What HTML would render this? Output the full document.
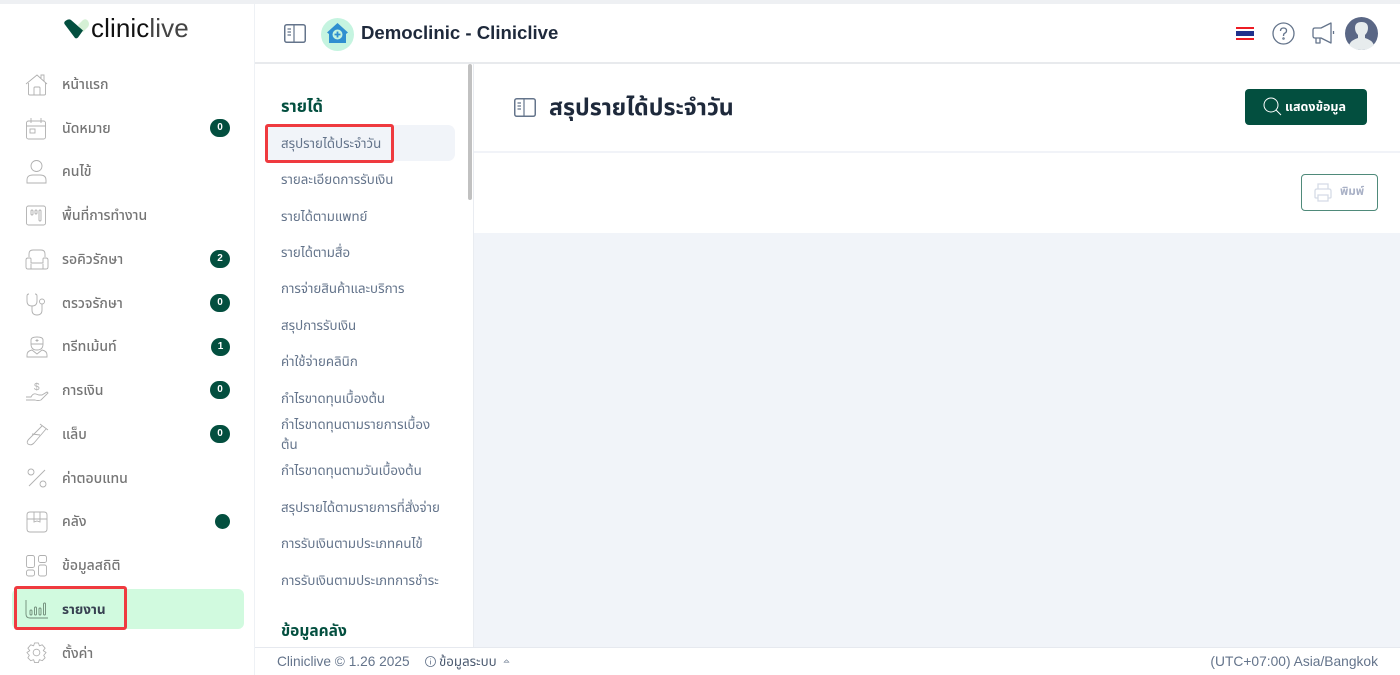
<!DOCTYPE html>
<html lang="th"><head><meta charset="utf-8"><title>Cliniclive</title>
<style>
*{box-sizing:border-box}
html,body{margin:0;padding:0;width:1400px;height:675px;overflow:hidden;background:#fff;font-family:"Liberation Sans","Noto Sans Thai","Noto Sans CJK SC",sans-serif}
.a{position:absolute;white-space:nowrap}
.nav{left:62px;font-size:14px;color:#757575;line-height:18px;font-weight:500}
.badge{width:20px;height:18px;border-radius:10px;background:#034f3f;color:#fff;font-size:10px;font-weight:700;text-align:center;line-height:18px}
.sub{left:281px;font-size:13.300px;color:#64748b;line-height:20px}
svg{position:absolute;overflow:visible}
.ic{fill:none;stroke:#b0b0b0;stroke-width:.9}
.hd{fill:none;stroke:#64748b;stroke-width:1.5}
</style></head><body>
<div class="a" style="left:0;top:0;width:1400px;height:4px;background:#eef0f3"></div>
<div class="a" style="left:254px;top:4px;width:1px;height:671px;background:#eef1f5"></div>
<div class="a" style="left:255px;top:62px;width:1145px;height:2px;background:#e8eaed"></div>

<!-- logo -->
<svg style="left:64px;top:19px" width="25" height="20" viewBox="0 0 25 20"><path d="M14 6L19 1Q22 -1 24 2Q26 5 24 8L19 13Z" fill="#d5f0d5"/><path d="M.5 5Q-.5 3 2 1.500Q5 -.5 7 1L19 11.500L14 18.500Q12.500 20 11 19Z" fill="#034f3f"/></svg>
<div class="a" style="left:91px;top:11px;font-size:26px;line-height:34px;color:#111;letter-spacing:.1px;font-family:'Liberation Sans',sans-serif">clinic<span style="color:#444">live</span></div>

<!-- active nav -->
<div class="a" style="left:12px;top:589px;width:232px;height:40px;background:#d1fadf;border-radius:6px"></div>

<!-- nav icons -->
<svg class="ic" style="left:25px;top:73px" width="24" height="24" viewBox="0 0 24 24"><path d="M1 11 L12 2 L22 11M3.500 10V21Q3.500 22 5 22H19Q20.500 22 20.500 21V10M9 22V15Q9 14 10 14H14Q15 14 15 15V22M16 5V2H19V8"/></svg>
<svg class="ic" style="left:26px;top:117px" width="22" height="23" viewBox="0 0 22 23"><rect x=".5" y="4" width="19" height="18" rx="2"/><path d="M.5 9H19.500M5 1V6M15 1V6"/><rect x="4" y="12" width="5" height="4"/></svg>
<svg class="ic" style="left:26px;top:160px" width="22" height="24" viewBox="0 0 22 24"><circle cx="10.500" cy="6" r="5.500"/><path d="M1 23V20Q1 15 7 15H14Q20 15 20 20V23Z"/></svg>
<svg class="ic" style="left:26px;top:205px" width="22" height="22" viewBox="0 0 22 22"><rect x=".5" y="1" width="19" height="19" rx="2"/><rect x="5" y="5" width="2" height="5" rx="1"/><rect x="9" y="5" width="2" height="4" rx="1"/><rect x="13" y="5" width="2" height="11" rx="1"/></svg>
<svg class="ic" style="left:25px;top:249px" width="24" height="22" viewBox="0 0 24 22"><path d="M4 8V5Q4 1 8 1H16Q20 1 20 5V8M6 14H18V10Q18 9 19 9H21Q23 9 23 11V18Q23 20 21 20H3Q1 20 1 18V11Q1 9 3 9H5Q6 9 6 10Z"/><path d="M6 15V20M18 15V20"/></svg>
<svg class="ic" style="left:26px;top:293px" width="22" height="23" viewBox="0 0 22 23"><path d="M3 1Q1 1 1 3V8Q1 13 6 13Q11 13 11 8V3Q11 1 9 1M6 13V17Q6 22 11 22Q16 22 16 17V11"/><circle cx="16" cy="8.500" r="2.500"/></svg>
<svg class="ic" style="left:26px;top:336px" width="22" height="22" viewBox="0 0 22 22"><path d="M5 4Q5 1 11 1Q17 1 17 4V8H5ZM5 8Q5 14 11 14Q17 14 17 8M1 21V19Q1 15 6 14L11 18L16 14Q21 15 21 19V21Z"/><path d="M11 3V6M9.500 4.500H12.500"/></svg>
<svg class="ic" style="left:25px;top:381px" width="24" height="22" viewBox="0 0 24 22"><path d="M1 16H6Q8 12 11 13L14 14H17L22 11L23 12L16 19Q13 20 10 19L1 19"/><text x="9" y="9" font-size="10" fill="#b0b0b0" stroke="none" font-family="Liberation Sans">$</text></svg>
<svg class="ic" style="left:25px;top:423px" width="24" height="23" viewBox="0 0 24 23"><path d="M15 1L23 7M17 3L4 16Q1 19 3 21Q6 23 9 20L21 6M7 11L15 12"/></svg>
<svg class="ic" style="left:27px;top:468px" width="20" height="20" viewBox="0 0 20 20"><circle cx="4" cy="4" r="3"/><circle cx="16" cy="16" r="3"/><path d="M2 18L18 2"/></svg>
<svg class="ic" style="left:26px;top:511px" width="22" height="22" viewBox="0 0 22 22"><path d="M1 8V4Q1 1 4 1H18Q21 1 21 4V18Q21 21 18 21H4Q1 21 1 18V8H21M8 8V1M14 1V8M14 8V11L11 10L8 11V8"/></svg>
<svg class="ic" style="left:26px;top:555px" width="22" height="22" viewBox="0 0 22 22"><rect x=".5" y=".5" width="8" height="12" rx="2"/><rect x="12.500" y=".5" width="8" height="7" rx="2"/><rect x=".5" y="15" width="8" height="6" rx="2"/><rect x="12.500" y="10" width="8" height="11" rx="2"/></svg>
<svg style="left:25px;top:599px;fill:none;stroke:#6f8a78;stroke-width:.9" width="24" height="20" viewBox="0 0 24 20"><path d="M1 1V15Q1 19 5 19H23"/><rect x="5" y="11" width="2" height="5" rx="1"/><rect x="9.500" y="8" width="2" height="8" rx="1"/><rect x="14" y="9" width="2" height="7" rx="1"/><rect x="18.500" y="4" width="2" height="12" rx="1"/></svg>
<svg class="ic" style="left:25px;top:641px" width="23" height="23" viewBox="0 0 24 24"><circle cx="12" cy="12" r="3.500"/><path d="M10 2H14L15 5L18 4L21 7.500L19 10L22 12L19.500 15L21 17.500L18 20.500L15 19.500L14 22.500H10L9 19.500L6 20.500L3 17.500L4.500 15L2 12L5 10L3 7.500L6 4L9 5Z" stroke-linejoin="round"/></svg>

<!-- nav text -->
<div class="a nav" style="top:75px">หน้าแรก</div>
<div class="a nav" style="top:119px">นัดหมาย</div>
<div class="a nav" style="top:162px">คนไข้</div>
<div class="a nav" style="top:206px">พื้นที่การทำงาน</div>
<div class="a nav" style="top:250px">รอคิวรักษา</div>
<div class="a nav" style="top:294px">ตรวจรักษา</div>
<div class="a nav" style="top:337px">ทรีทเม้นท์</div>
<div class="a nav" style="top:381px">การเงิน</div>
<div class="a nav" style="top:425px">แล็บ</div>
<div class="a nav" style="top:469px">ค่าตอบแทน</div>
<div class="a nav" style="top:512px">คลัง</div>
<div class="a nav" style="top:556px">ข้อมูลสถิติ</div>
<div class="a nav" style="top:601px;color:#374151;font-weight:700;font-size:13.500px">รายงาน</div>
<div class="a nav" style="top:644px">ตั้งค่า</div>

<div class="a badge" style="left:210px;top:119px">0</div>
<div class="a badge" style="left:210px;top:250px">2</div>
<div class="a badge" style="left:210px;top:294px">0</div>
<div class="a badge" style="left:211px;top:338px;width:19px">1</div>
<div class="a badge" style="left:210px;top:381px">0</div>
<div class="a badge" style="left:210px;top:425px">0</div>
<div class="a" style="left:215px;top:514px;width:15px;height:15px;border-radius:50%;background:#034f3f"></div>

<!-- header -->
<svg class="hd" style="left:284px;top:24px" width="22" height="19" viewBox="0 0 22 19"><rect x=".75" y=".75" width="20.500" height="17.500" rx="2"/><path d="M10 1V18M3.500 5H7M3.500 8H7M3.500 11H7" stroke-width="1.200"/></svg>
<div class="a" style="left:321px;top:18px;width:33px;height:33px;border-radius:50%;background:#c5f4e0"></div>
<svg style="left:326px;top:22px" width="23" height="23" viewBox="0 0 23 23"><path d="M11.500 1L22 10.500L20 12V21H3V12L1 10.500Z" fill="#2f8fd0"/><circle cx="11.500" cy="12.500" r="5" fill="#c5f4e0"/><path d="M11.500 9.500V15.500M8.500 12.500H14.500" stroke="#2f8fd0" stroke-width="1.800"/></svg>
<div class="a" style="left:361px;top:20px;font-size:18.600px;line-height:26px;font-weight:700;color:#1e293b">Democlinic - Cliniclive</div>

<!-- flag -->
<div class="a" style="left:1236px;top:27px;width:18px;height:13px;background:linear-gradient(#ed1c24 0 2px,#fff 2px 4px,#20308c 4px 9px,#fff 9px 11px,#ed1c24 11px 13px)"></div>
<svg class="hd" style="left:1272px;top:22px" width="23" height="23" viewBox="0 0 23 23"><circle cx="11.500" cy="11.500" r="10.500" stroke-width="1.300"/><path d="M8.500 9Q8.500 6 11.500 6Q14.500 6 14.500 8.700Q14.500 10.500 12.500 11.300Q11.500 12 11.500 14" stroke-width="1.300"/><circle cx="11.500" cy="16.500" r=".5"/></svg>
<svg class="hd" style="left:1312px;top:22px" width="23" height="23" viewBox="0 0 23 23"><path d="M1 8Q1 6 3 6H9L19 1V21L9 16H3Q1 16 1 14ZM4 16V21H8V16M21.500 9V12" stroke-width="1.300" stroke-linejoin="round"/></svg>
<svg style="left:1345px;top:17px" width="33" height="33" viewBox="0 0 33 33"><circle cx="16.500" cy="16.500" r="16.500" fill="#5a6785"/><path d="M4 28Q6 23 13 21V18Q10 15 10 11Q10 5 16.500 5Q23 5 23 11Q23 15 20 18V21Q27 23 29 28Q24 33 16.500 33Q9 33 4 28Z" fill="#e7eced"/></svg>

<!-- sub sidebar -->
<div class="a" style="left:473px;top:64px;width:1px;height:583px;background:#e9ecf1"></div>
<div class="a" style="left:468px;top:64px;width:4px;height:136px;border-radius:2px;background:#c1c1c1"></div>
<div class="a" style="left:281px;top:97px;font-size:16.500px;line-height:20px;font-weight:700;color:#034f3f">รายได้</div>
<div class="a" style="left:266px;top:125px;width:189px;height:36px;background:#f1f4f9;border-radius:7px"></div>
<div class="a sub" style="top:134px">สรุปรายได้ประจำวัน</div>
<div class="a sub" style="top:170px">รายละเอียดการรับเงิน</div>
<div class="a sub" style="top:207px">รายได้ตามแพทย์</div>
<div class="a sub" style="top:243px">รายได้ตามสื่อ</div>
<div class="a sub" style="top:279px">การจ่ายสินค้าและบริการ</div>
<div class="a sub" style="top:316px">สรุปการรับเงิน</div>
<div class="a sub" style="top:352px">ค่าใช้จ่ายคลินิก</div>
<div class="a sub" style="top:389px">กำไรขาดทุนเบื้องต้น</div>
<div class="a sub" style="top:415px">กำไรขาดทุนตามรายการเบื้อง</div>
<div class="a sub" style="top:435px">ต้น</div>
<div class="a sub" style="top:461px">กำไรขาดทุนตามวันเบื้องต้น</div>
<div class="a sub" style="top:498px">สรุปรายได้ตามรายการที่สั่งจ่าย</div>
<div class="a sub" style="top:534px">การรับเงินตามประเภทคนไข้</div>
<div class="a sub" style="top:571px">การรับเงินตามประเภทการชำระ</div>
<div class="a" style="left:281px;top:622px;font-size:15.500px;line-height:20px;font-weight:700;color:#034f3f">ข้อมูลคลัง</div>

<!-- main -->
<div class="a" style="left:474px;top:151px;width:926px;height:2px;background:#f1f3f8"></div>
<div class="a" style="left:474px;top:233px;width:926px;height:414px;background:#f1f4f9"></div>
<svg class="hd" style="left:514px;top:98px" width="22" height="19" viewBox="0 0 22 19"><rect x=".75" y=".75" width="20.500" height="17.500" rx="2"/><path d="M10 1V18M3.500 5H7M3.500 8H7M3.500 11H7" stroke-width="1.200"/></svg>
<div class="a" style="left:549px;top:92px;font-size:23.200px;line-height:30px;font-weight:700;color:#1e293b">สรุปรายได้ประจำวัน</div>
<div class="a" style="left:1245px;top:89px;width:122px;height:36px;border-radius:4px;background:#034f3f"></div>
<svg style="left:1263px;top:97px;fill:none;stroke:#fff;stroke-width:1" width="20" height="20" viewBox="0 0 20 20"><circle cx="8" cy="8" r="7"/><path d="M13 13L18 18"/></svg>
<div class="a" style="left:1285px;top:98px;font-size:12.500px;line-height:18px;font-weight:700;color:#fff">แสดงข้อมูล</div>
<div class="a" style="left:1301px;top:174px;width:77px;height:37px;border:1px solid #4f8a7a;border-radius:4px;background:#fff"></div>
<svg style="left:1314px;top:183px;fill:none;stroke:#d5dbe6;stroke-width:1.300" width="18" height="20" viewBox="0 0 18 20"><path d="M4 6V1H14V6M4 15H2Q1 15 1 14V8Q1 6 3 6H15Q17 6 17 8V14Q17 15 16 15H14M4 12H14V18H4Z"/></svg>
<div class="a" style="left:1340px;top:184px;font-size:11.500px;line-height:16px;font-weight:700;color:#a9b1c6">พิมพ์</div>

<!-- footer -->
<div class="a" style="left:255px;top:647px;width:1145px;height:1px;background:#e6e9ef"></div>
<div class="a" style="left:277px;top:653px;font-size:13.700px;line-height:18px;color:#64748b">Cliniclive © 1.26 2025</div>
<svg style="left:425px;top:656px;fill:none;stroke:#64748b;stroke-width:.8" width="11" height="11" viewBox="0 0 11 11"><circle cx="5.500" cy="5.500" r="5"/><path d="M5.500 4.500V8.500M5.500 2.500V3.300"/></svg>
<div class="a" style="left:439px;top:653px;font-size:13.300px;line-height:18px;color:#4b5a70">ข้อมูลระบบ</div>
<svg style="left:503px;top:659px;fill:none;stroke:#64748b;stroke-width:.7" width="7" height="4" viewBox="0 0 8 5"><path d="M1 4L4 1L7 4Z"/></svg>
<div class="a" style="right:22px;top:653px;font-size:13.800px;line-height:18px;color:#64748b">(UTC+07:00) Asia/Bangkok</div>

<!-- red highlights -->
<div class="a" style="left:14px;top:586px;width:113px;height:44px;border:3px solid #ef3a3f;border-radius:3px"></div>
<div class="a" style="left:265px;top:124px;width:129px;height:39px;border:3px solid #ef3a3f;border-radius:3px"></div>
</body></html>
